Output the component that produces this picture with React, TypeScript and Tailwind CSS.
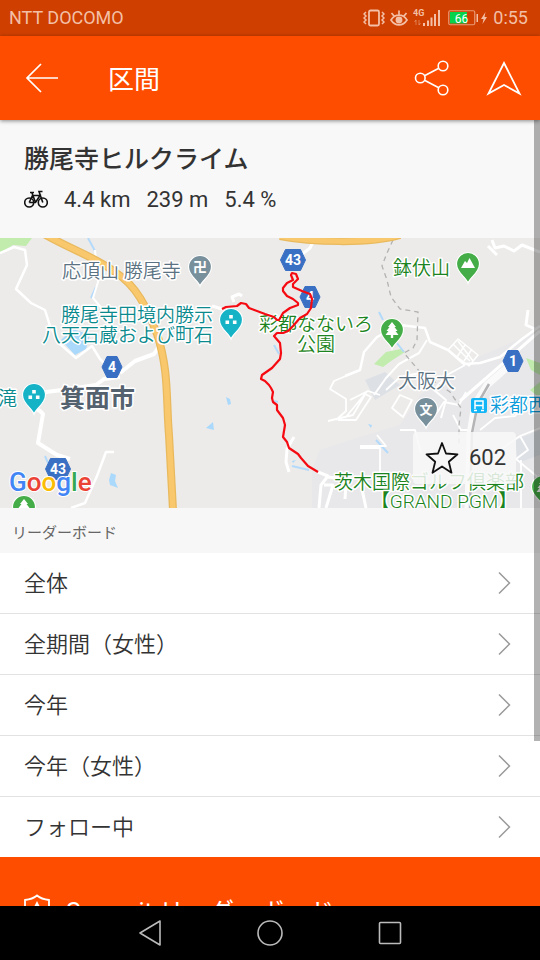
import type { ReactNode } from "react"

const boards = ["全体", "全期間（女性）", "今年", "今年（女性）", "フォロー中"]

const route =
  "222,309 226,307 237,306 241,303 246,304 249,308 265,314 274,317 277,320 279,320 283,313 290,308 298,305 298,303 293,299 287,296 283,291 283,288 287,283 293,280 291,275 292,273 296,274 298,279 293,284 293,287 302,291 310,294 312,299 311,308 307,314 300,318 293,326 288,331 283,333 277,333 274,336 280,343 281,353 280,359 272,368 262,375 261,379 265,381 269,385 271,388 273,392 272,398 273,402 277,405 277,410 283,418 285,425 283,437 287,442 289,448 298,454 301,458 308,466 318,472"

function StatusBar() {
  return (
    <div className="flex h-9 shrink-0 items-center justify-between bg-[#cf3f00] pl-[9px] pr-3 text-lg text-[#f3bfa6]">
      <span>NTT DOCOMO</span>
      <div className="flex items-center gap-[5px]">
        <svg className="h-5 w-[22px]" viewBox="0 0 22 20" fill="none" stroke="currentColor" strokeWidth="1.5">
          <rect x="6" y="2.5" width="10" height="15" rx="1.5" strokeWidth="1.8" />
          <path d="M3 4 1 6l2 2-2 2 2 2-2 2 2 2M19 4l2 2-2 2 2 2-2 2 2 2-2 2" />
        </svg>
        <svg className="h-5 w-[18px]" viewBox="0 0 18 20" fill="none" stroke="currentColor" strokeWidth="1.7">
          <path d="M1 12c4-6.500 12-6.500 16 0-4 6.500-12 6.500-16 0ZM9 7V2.500M4 8 1.500 5M14 8l2.500-3" />
          <circle cx="9" cy="12" r="2.600" fill="currentColor" />
        </svg>
        <svg className="h-5 w-7" viewBox="0 0 28 20" fill="currentColor">
          <text x="0" y="8" fontSize="9" fontWeight="700">4G</text>
          <path d="M10 15h2v3h-2zM14 12.500h2V18h-2zM17.500 9.500h2V18h-2zM21 6h2v12h-2zM25 2h2v16h-2z" />
          <path d="M3 12v5M6 12v5M1.500 14 3 12M7.500 15 6 17" fill="none" stroke="currentColor" strokeWidth="0.800" opacity="0.600" />
        </svg>
        <svg className="ml-0.5 h-5 w-[31px]" viewBox="0 0 31 20">
          <rect x="0.750" y="2.750" width="26" height="14" rx="1.500" fill="none" stroke="currentColor" strokeWidth="1.200" opacity="0.700" />
          <rect x="2" y="4" width="17" height="11.500" fill="#07d24a" />
          <path d="M28.500 6h1.500v8h-1.500z" fill="currentColor" />
          <text x="13.500" y="14.500" fontSize="12" fill="#fff" textAnchor="middle">66</text>
        </svg>
        <svg className="-ml-1 h-5 w-2" viewBox="0 0 8 20" fill="currentColor">
          <path d="M5.500 4 1 11h2.500L2.500 16 7 9H4.500z" />
        </svg>
        <span>0:55</span>
      </div>
    </div>
  )
}

function Header() {
  return (
    <header className="relative z-10 flex h-[84px] shrink-0 items-center bg-[#ff4d00] pl-6 pr-[18px] text-white shadow-[0_1px_4px_rgba(0,0,0,0.45)]">
      <button aria-label="戻る">
        <svg className="h-9 w-9" viewBox="0 0 36 36" fill="none" stroke="currentColor" strokeWidth="1.700">
          <path d="M34 18H3M17 4 3 18l14 14" />
        </svg>
      </button>
      <h1 className="ml-12 flex-1 pt-1 text-[26px] leading-9">区間</h1>
      <div className="flex gap-9">
        <button aria-label="共有">
          <svg className="h-9 w-9" viewBox="0 0 36 36" fill="none" stroke="currentColor" strokeWidth="1.600">
            <circle cx="6.300" cy="18" r="4.800" />
            <circle cx="29" cy="6" r="4.800" />
            <circle cx="29" cy="30" r="4.800" />
            <path d="m10.500 15.800 14.300-7.600M10.500 20.200l14.300 7.600" />
          </svg>
        </button>
        <button aria-label="ナビ">
          <svg className="h-9 w-9" viewBox="0 0 36 36" fill="none" stroke="currentColor" strokeWidth="1.800">
            <path d="M18 3 33.500 33.500 18 25 2.500 33.500z" />
          </svg>
        </button>
      </div>
    </header>
  )
}

function SegmentInfo() {
  return (
    <section className="bg-[#f8f8f8] px-6 pb-6 pt-6 text-[#333]">
      <h2 className="text-[25px] font-medium leading-8">勝尾寺ヒルクライム</h2>
      <div className="mt-2.5 flex items-center gap-4 text-[22px] leading-7">
        <svg className="h-5 w-6" viewBox="0 0 24 20" fill="none" stroke="#111" strokeWidth="1.600">
          <circle cx="5.200" cy="12.500" r="4.500" />
          <circle cx="18.800" cy="12.500" r="4.500" />
          <path d="M5.200 12.500 8.500 5.500H16l-4.500 7H5.200M8 3l3.500 9.500M6 2.500h4M18.800 12.500 15 1.500h3.500" />
        </svg>
        <span>4.4 km</span>
        <span>239 m</span>
        <span>5.4 %</span>
      </div>
    </section>
  )
}

type PinProps = { x: number; y: number; color: string; children: ReactNode }

function Pin({ x, y, color, children }: PinProps) {
  return (
    <g transform={`translate(${x} ${y})`}>
      <path
        d="M0 19C-2 13-11.500 9-11.500 0a11.500 11.500 0 0 1 23 0C11.500 9 2 13 0 19Z"
        fill={color}
        stroke="#fff"
        strokeWidth="1.200"
      />
      {children}
    </g>
  )
}

function Badge({ x, y, label }: { x: number; y: number; label: string }) {
  const w = label.length > 1 ? 12.5 : 10
  return (
    <g transform={`translate(${x} ${y})`}>
      <path
        d={`M${-w} 0 ${-w + 5}-10.500H${w - 5}L${w} 0 ${w - 5} 10.500H${-w + 5}Z`}
        fill="#3a70c4"
        stroke="#3a70c4"
        strokeLinejoin="round"
      />
      <text y="5" fontSize="14" fontWeight="700" fill="#fff" textAnchor="middle">{label}</text>
    </g>
  )
}

const dots = <path d="M-1.800-5h3.600v3.600h-3.600zM-5.500 0.500h3.600v3.600h-3.600zM1.900 0.500h3.600v3.600H1.900z" fill="#fff" />
const tree = <path d="m0-8 4 5H2.500L5.500 1H3.500L6.500 5H1.200v3h-2.400V5h-5.300l3-4h-2l3-4H-4z" fill="#fff" />

function SegmentMap() {
  return (
    <section className="relative">
      <svg
        className="block h-[270px] w-full bg-[#ecebe9]"
        viewBox="0 238 540 270"
        preserveAspectRatio="xMidYMid slice"
        role="img"
        aria-label="区間の地図"
      >
        {/* built-up areas */}
        <path d="M320 450 350 440 400 425 420 395 460 365 540 330V508H312V470Z" fill="#e8e8ea" />
        <path d="M365 380 385 372 400 385 375 400ZM515 440l25-10v25l-22 8Z" fill="#dde1e6" />

        {/* parks */}
        <path d="M0 238h32l-6 8-13-1-13 8ZM374 364l12-12 15-3 4 3-14 9-8 6ZM526 358l14 5v12l-9-5ZM530 390l10-8v16Z" fill="#c1ecae" />

        {/* water */}
        <path d="m61 340 12-11 17 6-4 14-11 6ZM111 473l5 2-1 6 3 7-8-3-1-5ZM226 397l4 2 1 5-3 1ZM206 428l7-6 1 8ZM368 424l4 1-1 3ZM292 461l4-1-3 3Z" fill="#abd9fb" />
        <path d="m88 238 7 13M96 287l-5 11M379 312l4 8M396 342l8 10M45 456l3 7M274 345l5 9M292 466l17 4M274 401l4 1M376 440l12 13" fill="none" stroke="#b4dafb" strokeWidth="2" />

        {/* minor roads */}
        <g fill="none" stroke="#fff" strokeWidth="2.500" strokeLinejoin="round">
          <path d="m0 253 14-6 11 3 2 15-11 24 15 14 14 7 5 16 10 18 16 14 16-12 8 13 9 9" />
          <path d="m95 250 3 32-5 16 17 20" strokeWidth="2" />
          <path d="m120 373 15-12 19-7 6-9M36 400l10-8 16-2 34-5 8-6 16-2M30 405l10 6 3 3-5 29 19 12 13 4" strokeWidth="4" />
          <path d="M114 452h-8l-9 24-12 27-14 5" />
          <path d="m212 306 10 3M234 302l-2-5 7-3 3 2" strokeWidth="3" />
          <path d="m314 240-4 8-10 8" strokeWidth="3" />
          <path d="M345 376l15-6 4-18 13-15 23-12 25 3 5 14 18 8 16 14 16-1 20-6 22-18 18-13" />
          <path d="m374 395 12-17 13-14 20-11 8-13M465 365l-18 10-13 15 12 10-5 18" strokeWidth="2" />
          <path d="m448 350 10-11 20 16-9 11zM453 344l17 17M458 341l15 20M465 345l-8 12M472 349l-8 12" strokeWidth="1.500" />
          <path d="m492 240 3 8 9-2 10 5 8-6 18 7M488 246l9 9M528 310l-2 15 9 4M540 331l-80 70" strokeWidth="3" />
          <path d="m360 370-26 11-4 8 16 10v12l-10 9M328 421l25-6 14-24M345 418l20-24 6 3-15 23h-18M350 400l18-9 12 4M360 446h26l-9-11" strokeWidth="1.800" />
          <path d="m386 390 14-13 20-4M392 408l8-13 12 5-9 17-11-9ZM400 430h15l6 23M432 420l12-18 15 3 7-13M360 448h20v24M453 415l8 15h9M480 430l15-12 20-2 12-15M500 450l20-14 8 14-12 9 24 20M520 436l20-8M521 460v48" strokeWidth="1.800" />
          <path d="m318 472 10 4-7 9-2 23M328 477l18 2M324 485h9l-7 23M346 484l-1 15M360 480l6 28" strokeWidth="3" />
          <path d="m294 437-7 12-1 13 3 10" strokeWidth="3" />
          <path d="m512 363-25 22-12 19-5 30-2 74" stroke="#fafafa" strokeWidth="7" />
        </g>
        <path d="m489 384-11 19-6 30-2 75" fill="none" stroke="#b4b4b6" strokeWidth="2.500" />
        <path d="m393 240-6 13-5 13 5 14 4 17 9 12 18 3-1 28-4 8-9 5 16 19 30 20 11 16-2 17v20" fill="none" stroke="#b2b2b2" strokeWidth="1.300" strokeDasharray="5 4" />

        {/* highways */}
        <g fill="none" stroke="#e9b95d" strokeWidth="8">
          <path d="M44 234C72 250 93 256 115 272c22 14 32 36 42 62 12 36 9 65 12 101l4 75" />
          <path d="M280 236c30 6 90 8 120-1" />
        </g>
        <g fill="none" stroke="#fac86c" strokeWidth="5.500">
          <path d="M44 234C72 250 93 256 115 272c22 14 32 36 42 62 12 36 9 65 12 101l4 75" />
          <path d="M280 236c30 6 90 8 120-1" />
        </g>

        <Badge x={293} y={260} label="43" />
        <Badge x={310} y={297} label="4" />
        <Badge x={112} y={367} label="4" />
        <Badge x={513} y={361} label="1" />
        <Badge x={58} y={469} label="43" />

        <Pin x={200} y={267} color="#78909c">
          <text y="5" fontSize="14" fontWeight="700" fill="#fff" textAnchor="middle">卍</text>
        </Pin>
        <Pin x={231} y={320} color="#16b3c7">{dots}</Pin>
        <Pin x={34} y={395} color="#16b3c7">{dots}</Pin>
        <Pin x={468} y={264} color="#45ad47">
          <path d="M-7 4-3-3l2 2 2.500-5L7 4Z" fill="#fff" />
        </Pin>
        <Pin x={392} y={330} color="#45ad47">{tree}</Pin>
        <Pin x={426} y={409} color="#78909c">
          <text y="5" fontSize="13" fontWeight="700" fill="#fff" textAnchor="middle">文</text>
        </Pin>
        <Pin x={24} y={507} color="#45ad47">{tree}</Pin>
        <Pin x={543} y={487} color="#45ad47">{tree}</Pin>

        <g>
          <rect x="471" y="398" width="16" height="15" rx="2" fill="#12b5f5" />
          <path d="M475 409v-8h8v8M475 405.500h8M474 410.500h3M481 410.500h3" fill="none" stroke="#fff" strokeWidth="1.500" />
        </g>

        <g fontSize="19" stroke="#fff" strokeWidth="3" strokeLinejoin="round" className="font-[350] [paint-order:stroke]">
          <text x="62" y="278" fill="#5b7282">応頂山 勝尾寺</text>
          <g fill="#0b8a8e">
            <text x="213" y="322" textAnchor="end">勝尾寺田境内勝示</text>
            <text x="213" y="342" textAnchor="end">八天石蔵および町石</text>
            <text x="-2" y="405">滝</text>
          </g>
          <g fill="#1b8420">
            <text x="393" y="275">鉢伏山</text>
            <text x="316" y="331" textAnchor="middle">彩都なないろ</text>
            <text x="316" y="351" textAnchor="middle">公園</text>
            <text x="429" y="489" textAnchor="middle">茨木国際ゴルフ倶楽部</text>
            <text x="444" y="508" textAnchor="middle">【GRAND PGM】</text>
          </g>
          <text x="398" y="388" fill="#5b7282">大阪大</text>
          <text x="490" y="412" fill="#0d9ddb">彩都西</text>
          <text x="60" y="407" fontSize="25" fontWeight="700" fill="#54616f">箕面市</text>
        </g>

        <polyline points={route} fill="none" stroke="#f60a12" strokeWidth="2.200" strokeLinejoin="round" />

        <text x="9" y="491" fontSize="26" fontWeight="500" stroke="#fff" strokeWidth="2" className="[paint-order:stroke]">
          <tspan fill="#4285f4">G</tspan>
          <tspan fill="#ea4335">o</tspan>
          <tspan fill="#fbbc05">o</tspan>
          <tspan fill="#4285f4">g</tspan>
          <tspan fill="#34a853">l</tspan>
          <tspan fill="#ea4335">e</tspan>
        </text>
      </svg>
      <button className="absolute bottom-6 right-6 flex h-[52px] items-center gap-2 rounded-sm bg-[#f8f8f8]/85 pl-3 pr-[10px] text-[22px] leading-7 text-[#333]">
        <svg className="h-9 w-9" viewBox="0 0 36 36" fill="none" stroke="#111" strokeWidth="1.800" strokeLinejoin="round">
          <path d="m17 3 4 10.500 11.500.8-8.700 7.400 2.700 11L17 26.500l-9.500 6.200 2.700-11L1.500 14.300l11.500-.8z" />
        </svg>
        602
      </button>
    </section>
  )
}

function Leaderboards() {
  return (
    <section>
      <h3 className="bg-[#f7f7f7] px-3 pb-2.5 pt-[15px] text-[15px] leading-5 text-[#666]">リーダーボード</h3>
      <ul className="divide-y divide-[#e2e2e2] bg-white">
        {boards.map((name) => (
          <li key={name}>
            <a href="#" className="flex h-[60px] items-center justify-between px-6 text-[22px] leading-8 text-[#333]">
              <span className="pt-0.5 font-[350]">{name}</span>
              <svg className="h-6 w-6" viewBox="0 0 24 24" fill="none" stroke="#999" strokeWidth="1.500">
                <path d="m7 1.500 10.500 10.500L7 22.500" />
              </svg>
            </a>
          </li>
        ))}
      </ul>
    </section>
  )
}

function SummitBanner() {
  return (
    <a href="#" className="flex items-center gap-4 bg-[#ff4d00] px-6 pb-8 pt-9 text-[25px] leading-10 text-white">
      <svg className="h-8 w-[26px] self-start" viewBox="0 0 26 32" fill="none" stroke="currentColor" strokeWidth="1.800">
        <path d="M13 2.500c3.500 3 7 4 12 4.500v13c0 5-6 8-12 11C7 28 1 25 1 20V7c5-.5 8.500-1.500 12-4.500Z" />
        <path d="m13 8 6 12h-3.500L13 15l-2.500 5H7z" fill="currentColor" stroke="none" />
      </svg>
      Summit リーダーボード
    </a>
  )
}

function NavBar() {
  return (
    <nav className="flex h-[54px] shrink-0 items-center justify-center gap-[84px] bg-black text-[#bbb]">
      <button aria-label="戻る">
        <svg className="h-9 w-9" viewBox="0 0 36 36" fill="none" stroke="currentColor" strokeWidth="1.600" strokeLinejoin="round">
          <path d="M28 6v24L8 18z" />
        </svg>
      </button>
      <button aria-label="ホーム">
        <svg className="h-9 w-9" viewBox="0 0 36 36" fill="none" stroke="currentColor" strokeWidth="1.600">
          <circle cx="18" cy="18" r="12" />
        </svg>
      </button>
      <button aria-label="アプリ履歴">
        <svg className="h-9 w-9" viewBox="0 0 36 36" fill="none" stroke="currentColor" strokeWidth="1.600">
          <rect x="7.500" y="7.500" width="21" height="21" rx="1" />
        </svg>
      </button>
    </nav>
  )
}

function App() {
  return (
    <div className="flex h-screen flex-col bg-white font-['Roboto','Noto_Sans_CJK_JP',sans-serif]">
      <StatusBar />
      <Header />
      <div className="relative min-h-0 flex-1">
        <main className="h-full overflow-y-auto [scrollbar-width:none]">
          <SegmentInfo />
          <SegmentMap />
          <Leaderboards />
          <SummitBanner />
        </main>
        {/* scroll thumb */}
        <div className="absolute right-0 top-0 h-[79%] w-1.5 bg-black/30" />
      </div>
      <NavBar />
    </div>
  )
}

export default App
